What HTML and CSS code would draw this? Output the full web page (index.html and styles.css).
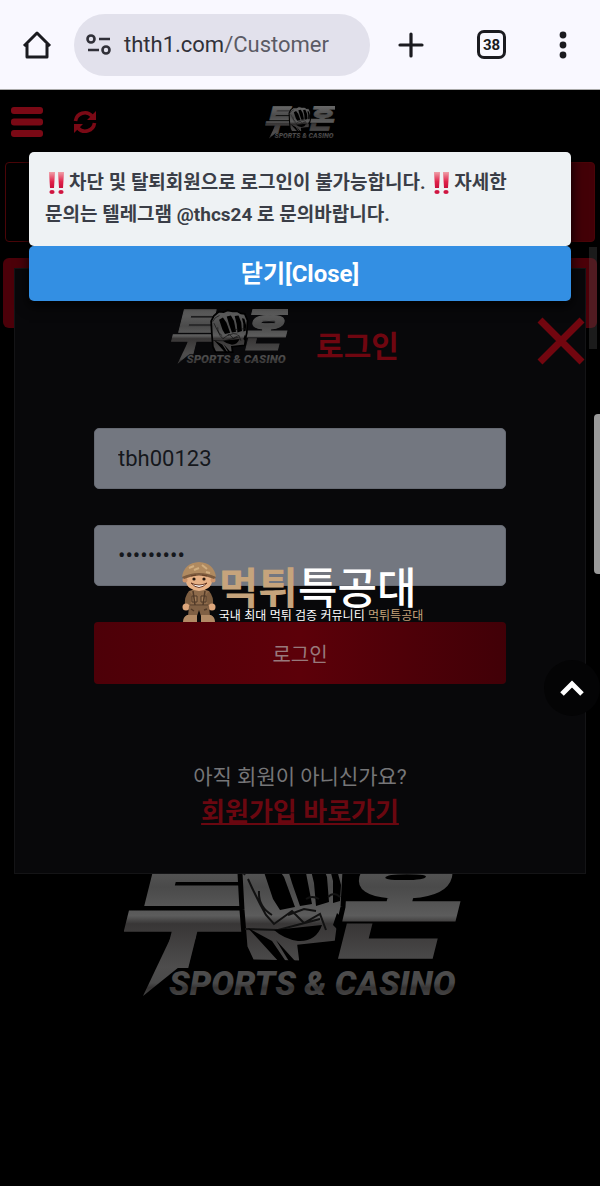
FILE: index.html
```
<!DOCTYPE html>
<html lang="ko">
<head>
    <meta charset="UTF-8">
    <meta name="viewport" content="width=device-width, initial-scale=1.0">
    <title>로그인</title>
    <link rel="stylesheet" href="styles.css">
</head>
<body>
    <!-- shared drawings -->
    <svg class="defs" width="0" height="0" aria-hidden="true">
        <defs>
            <linearGradient id="steel" gradientUnits="userSpaceOnUse" x1="0" y1="0" x2="0" y2="160">
                <stop offset="0" stop-color="#686868"/>
                <stop offset="0.3" stop-color="#4a4a4a"/>
                <stop offset="0.48" stop-color="#5c5c5c"/>
                <stop offset="0.53" stop-color="#383636"/>
                <stop offset="0.8" stop-color="#4e4d4d"/>
                <stop offset="0.9" stop-color="#4a4a4a"/>
                <stop offset="0.93" stop-color="#363434"/>
                <stop offset="1" stop-color="#4c4c4c"/>
            </linearGradient>
            <linearGradient id="bangRed" x1="0" y1="0" x2="0" y2="1">
                <stop offset="0" stop-color="#f0a0a8"/>
                <stop offset="0.6" stop-color="#e0224a"/>
                <stop offset="1" stop-color="#c8103c"/>
            </linearGradient>
            <symbol id="bang" viewBox="0 0 24 24">
                <path d="M4 1 H10 L9 17 H5 Z M13 1 H19 L18 17 H14 Z" fill="url(#bangRed)"/>
                <ellipse cx="7" cy="21" rx="2.6" ry="2" fill="#d01540"/>
                <ellipse cx="16" cy="21" rx="2.6" ry="2" fill="#d01540"/>
            </symbol>
            <symbol id="logo" viewBox="0 0 338 160">
                <text class="logo-word" x="-9" y="114">투</text>
                <text class="logo-word" x="200" y="107">혼</text>
                <path d="M47 98 L72 98 L60 124 L19 157 Z" fill="url(#steel)"/>
                <path d="M116 34 L124 19 L138 7 L152 8 L163 3 L178 6 L190 5 L202 12 L213 13 L221 32 L219 68 L216 81 L213 104 L176 108 L178 124 L128 123 L121 108 L118 71 Z" fill="url(#steel)" stroke="#000" stroke-width="5"/>
                <path d="M139 30 L150 24 L160 38 L171 68 L156 71 L149 60 Z M161 21 L173 18 L182 34 L188 65 L176 67 L168 44 Z M184 19 L195 18 L203 38 L205 63 L192 67 L190 44 Z M205 26 L212 27 L217 46 L216 62 L209 64 L209 42 Z" fill="#000"/>
                <path d="M124 40 Q132 58 142 76 L150 85 L168 72 L180 84 L196 75 L202 91 M135 52 Q134 68 148 76 M121 90 L154 91 L196 80 M164 76 L180 70 L192 72 M182 60 Q188 56 195 60 M204 58 Q210 52 216 58 M120 36 Q126 22 140 18" fill="none" stroke="#111" stroke-width="2"/>
                <path d="M150 91 L198 86 Q192 103 174 102 Q160 100 150 91 Z M124 89 L148 102 L163 124 L156 124 Z M152 101 L171 122 L166 124 Z M213 74 L217 78 L215 92 L209 86 Z" fill="#000"/>
                <text class="logo-sub" x="45" y="156">SPORTS &amp; CASINO</text>
            </symbol>
        </defs>
    </svg>

    <div class="browser-bar">
        <button class="icon-btn" aria-label="홈">
            <svg width="30" height="30" viewBox="0 0 30 30"><path d="M2 16 L15 3 L28 16 M5 14 V27 H25 V14" fill="none" stroke="#1b1b20" stroke-width="3" stroke-linejoin="round"/></svg>
        </button>
        <button class="address">
            <svg width="26" height="22" viewBox="0 0 26 22" fill="none" stroke="#303038" stroke-width="2.6"><circle cx="5" cy="5" r="3.5"/><path d="M13 5 H24 M2 16 H13"/><circle cx="20" cy="16" r="3.5"/></svg>
            <span class="url"><span class="host">thth1.com</span>/Customer</span>
        </button>
        <div class="actions">
            <button class="icon-btn" aria-label="새 탭">
                <svg width="26" height="26" viewBox="0 0 26 26"><path d="M13 2 V24 M2 13 H24" stroke="#1b1b20" stroke-width="3.2" stroke-linecap="round"/></svg>
            </button>
            <button class="tab-count">38</button>
            <button class="icon-btn" aria-label="메뉴">
                <svg width="8" height="28" viewBox="0 0 8 28" fill="#1b1b20"><circle cx="4" cy="4" r="3.4"/><circle cx="4" cy="14" r="3.4"/><circle cx="4" cy="24" r="3.4"/></svg>
            </button>
        </div>
    </div>

    <div class="site">
        <header class="site-header">
            <div class="header-tools">
                <button class="icon-btn" aria-label="전체메뉴">
                    <svg width="32" height="30" viewBox="0 0 32 30" fill="#7a0915"><rect width="32" height="7" rx="3"/><rect y="11.5" width="32" height="7" rx="3"/><rect y="23" width="32" height="7" rx="3"/></svg>
                </button>
                <button class="icon-btn" aria-label="새로고침">
                    <svg width="24" height="24" viewBox="0 0 24 24"><path d="M2.5 11 A9.5 9.5 0 0 1 19 6 M21.5 13 A9.5 9.5 0 0 1 5 18" fill="none" stroke="#7a0915" stroke-width="3.6"/><path d="M23 1 V10 H14 Z M1 23 V14 H10 Z" fill="#7a0915"/></svg>
                </button>
            </div>
            <svg class="header-logo" role="img" aria-label="투혼"><use href="#logo"/></svg>
        </header>
        <div class="account">
            <div class="account-box"></div>
            <div class="account-box filled"></div>
        </div>
        <div class="category"></div>
        <main class="hero">
            <svg class="hero-logo" role="img" aria-label="투혼"><use href="#logo"/></svg>
        </main>

        <div class="side-track"></div>
        <div class="side-thumb"></div>

        <form class="login">
            <div class="login-head">
                <svg class="login-logo" role="img" aria-label="투혼"><use href="#logo"/></svg>
                <h1>로그인</h1>
                <button type="button" class="icon-btn login-close" aria-label="닫기">
                    <svg width="48" height="48" viewBox="0 0 48 48"><path d="M3 3 L45 45 M45 3 L3 45" stroke="#72060f" stroke-width="7"/></svg>
                </button>
            </div>
            <input type="text" value="tbh00123" aria-label="아이디">
            <input type="password" value="123456789" aria-label="비밀번호">
            <button type="submit" class="submit">로그인</button>
            <p>아직 회원이 아니신가요?</p>
            <a href="#">회원가입 바로가기</a>
        </form>

        <button class="to-top" aria-label="맨 위로">
            <svg width="24" height="18" viewBox="0 0 24 18"><path d="M2 15 L12 5 L22 15" fill="none" stroke="#fff" stroke-width="5"/></svg>
        </button>

        <div class="watermark">
            <svg width="36" height="60" viewBox="0 0 36 60" aria-hidden="true">
                <path d="M8 29 Q18 25 28 29 L30 45 H6 Z" fill="#8e6b4b"/>
                <path d="M8 29 Q3 35 4 43 L9 44 L11 33 Z M28 29 Q33 35 32 43 L27 44 L25 33 Z" fill="#7d5d40"/>
                <circle cx="5" cy="45" r="3.5" fill="#dda67b"/><circle cx="31" cy="45" r="3.5" fill="#dda67b"/>
                <path d="M8 44 H28 L29 54 H20 L18 48 L16 54 H7 Z" fill="#806044"/>
                <path d="M6 53 H16 V60 H2 Q2 55 6 53 Z M20 53 H30 Q34 55 34 60 H20 Z" fill="#b28a65"/>
                <path d="M11 34 h5 v6 h-5 z M20 34 h5 v6 h-5 z M9 43 H27" fill="#a27d59" stroke="#4c3829"/>
                <path d="M12 29 L14 43 M24 29 L22 43 M10 47 l3 2 M23 48 l3 -1" stroke="#513a28" stroke-width="1.5"/>
                <ellipse cx="18" cy="19" rx="13" ry="10" fill="#e7b185"/>
                <circle cx="4" cy="18" r="2.5" fill="#cd946b"/><circle cx="32" cy="18" r="2.5" fill="#cd946b"/>
                <path d="M1 15 Q3 1 18 0 Q33 1 35 15 Q18 8 1 15 Z" fill="#b08a60"/>
                <path d="M1 15 Q18 7 35 15 L33 17 Q18 10 3 17 Z" fill="#7c5a3d"/>
                <path d="M8 6 l5 -2 M21 3 l5 4 M13 8 l5 -2 M25 10 l4 1" stroke="#d0ad7f" stroke-width="2"/>
                <circle cx="13" cy="17" r="1.6" fill="#25180f"/><circle cx="23" cy="17" r="1.6" fill="#25180f"/>
                <path d="M10 21 Q18 25 26 21 Q18 30 10 21 Z" fill="#fff" stroke="#693822"/>
                <path d="M10 14 l5 -1 M21 13 l5 1" stroke="#684128"/>
            </svg>
            <div>
                <div class="mark-name"><span>먹튀</span>특공대</div>
                <div class="mark-sub">국내 최대 먹튀 검증 커뮤니티 <span>먹튀특공대</span></div>
            </div>
        </div>

        <div class="notice" role="dialog">
            <p><svg class="bang"><use href="#bang"/></svg>차단 및 탈퇴회원으로 로그인이 불가능합니다. <svg class="bang"><use href="#bang"/></svg>자세한 문의는 텔레그램 @thcs24 로 문의바랍니다.</p>
            <button>닫기[Close]</button>
        </div>
    </div>
</body>
</html>
```
FILE: styles.css
```
* {
    box-sizing: border-box;
}
body {
    margin: 0;
    min-height: 100vh;
    display: flex;
    flex-direction: column;
    background-color: #000;
    font-family: Roboto, "Noto Sans CJK KR", sans-serif;
}
button {
    border: none;
    padding: 0;
    font-family: inherit;
    cursor: pointer;
}
svg {
    display: block;
}
.defs {
    position: absolute;
}
.icon-btn {
    background: none;
    display: flex;
    align-items: center;
    justify-content: center;
}

/* browser bar */
.browser-bar {
    height: 90px;
    display: flex;
    align-items: center;
    gap: 22px;
    padding: 0 33px 0 22px;
    background-color: #f9f8ff;
    border-bottom: 1px solid #aaa;
}
.address {
    flex: 1;
    height: 62px;
    display: flex;
    align-items: center;
    gap: 12px;
    padding: 0 12px;
    border-radius: 31px;
    background-color: #e2e1ec;
}
.url {
    font-size: 22px;
    color: #5b5b65;
}
.host {
    color: #303038;
}
.actions {
    display: flex;
    align-items: center;
    gap: 53px;
    padding-left: 6px;
}
.tab-count {
    width: 29px;
    height: 29px;
    background: none;
    border: 3px solid #1b1b20;
    border-radius: 7px;
    font-size: 15px;
    font-weight: bold;
    color: #1b1b20;
}

/* page */
.site {
    position: relative;
    flex: 1;
    overflow: hidden;
}
.site-header {
    height: 64px;
    display: grid;
    grid-template-columns: 1fr 70px 1fr;
    align-items: center;
    padding: 0 11px;
}
.header-tools {
    display: flex;
    align-items: center;
    gap: 30px;
}
.header-logo {
    width: 70px;
    height: 33px;
}
.account {
    display: grid;
    grid-template-columns: 1fr 1fr;
    gap: 10px;
    margin: 8px 5px 16px;
}
.account-box {
    height: 80px;
    border: 1px solid #4a0508;
    border-radius: 4px;
}
.filled {
    background-color: #430007;
}
.category {
    height: 70px;
    margin: 0 3px;
    border-radius: 6px;
    background-color: #4c0009;
}
.hero {
    padding: 511px 14px 100px 0;
}
.hero-logo {
    width: 338px;
    height: 160px;
    margin: 0 auto;
}
.logo-word,
.logo-sub {
    fill: url(#steel);
    font-style: italic;
}
.logo-word {
    font-family: "Noto Sans CJK KR", sans-serif;
    font-size: 140px;
    font-weight: 900;
    stroke: url(#steel);
    stroke-width: 3px;
}
.logo-sub {
    font-family: Roboto, sans-serif;
    font-size: 34px;
    font-weight: 900;
}
.side-track {
    position: absolute;
    top: 157px;
    right: 3px;
    width: 8px;
    height: 102px;
    background-color: rgba(90, 90, 90, 0.3);
}
.side-thumb {
    position: absolute;
    top: 324px;
    right: 0;
    width: 6px;
    height: 160px;
    border-radius: 4px 0 0 4px;
    background-color: #999;
}

/* login popup */
.login {
    position: absolute;
    top: 178px;
    left: 14px;
    right: 14px;
    display: flex;
    flex-direction: column;
    padding: 40px 79px 42px;
    background-color: #08080a;
    border: 1px solid #141416;
    text-align: center;
}
.login-head {
    display: flex;
    justify-content: center;
    gap: 28px;
    margin-bottom: 61px;
    padding-right: 30px;
}
.login-logo {
    width: 117px;
    height: 56px;
}
.login h1 {
    margin: 18px 0 0;
    font-size: 30px;
    line-height: 40px;
    font-weight: bold;
    color: #6f0610;
}
.login-close {
    position: absolute;
    top: 48px;
    right: 0;
}
.login input {
    width: 100%;
    height: 61px;
    margin-bottom: 36px;
    padding: 0 23px;
    border: 1px solid #666a73;
    border-radius: 5px;
    background-color: #737780;
    font-family: inherit;
    font-size: 22px;
    color: #15171c;
}
.submit {
    height: 62px;
    border-radius: 4px;
    background: linear-gradient(to right, #4d0008, #5c0009 50%, #410007);
    font-size: 20px;
    color: #98797c;
}
.login p {
    margin: 77px 0 0;
    font-size: 21px;
    line-height: 32px;
    color: #767678;
}
.login a {
    font-size: 26px;
    line-height: 38px;
    font-weight: bold;
    color: #6a0710;
}
.to-top {
    position: absolute;
    top: 570px;
    right: 0;
    width: 56px;
    height: 56px;
    display: flex;
    align-items: center;
    justify-content: center;
    border-radius: 28px;
    background-color: #040405;
}

/* watermark */
.watermark {
    position: absolute;
    top: 472px;
    left: 0;
    right: 0;
    display: flex;
    justify-content: center;
    gap: 2px;
    padding-left: 4px;
    color: #fff;
    font-family: "Noto Sans CJK KR", sans-serif;
    pointer-events: none;
}
.mark-name {
    font-size: 43px;
    line-height: 46px;
    font-weight: 500;
}
.mark-name span {
    font-weight: bold;
    color: #c6a47c;
}
.mark-sub {
    font-size: 12px;
    line-height: 14px;
}
.mark-sub span {
    color: #c6a47c;
}

/* notice popup */
.notice {
    position: absolute;
    top: 62px;
    left: 29px;
    right: 29px;
    box-shadow: 0 4px 12px #000;
}
.notice p {
    margin: 0;
    padding: 15px 16px;
    border-radius: 5px;
    background-color: #eef2f4;
    font-size: 19px;
    line-height: 32px;
    font-weight: bold;
    color: #3a3e47;
    word-break: keep-all;
}
.bang {
    display: inline-block;
    width: 24px;
    height: 24px;
    vertical-align: -6px;
}
.notice button {
    display: block;
    width: 100%;
    height: 55px;
    padding-bottom: 4px;
    border-radius: 5px;
    background-color: #338fe3;
    font-size: 24px;
    font-weight: bold;
    color: #fff;
}
```
